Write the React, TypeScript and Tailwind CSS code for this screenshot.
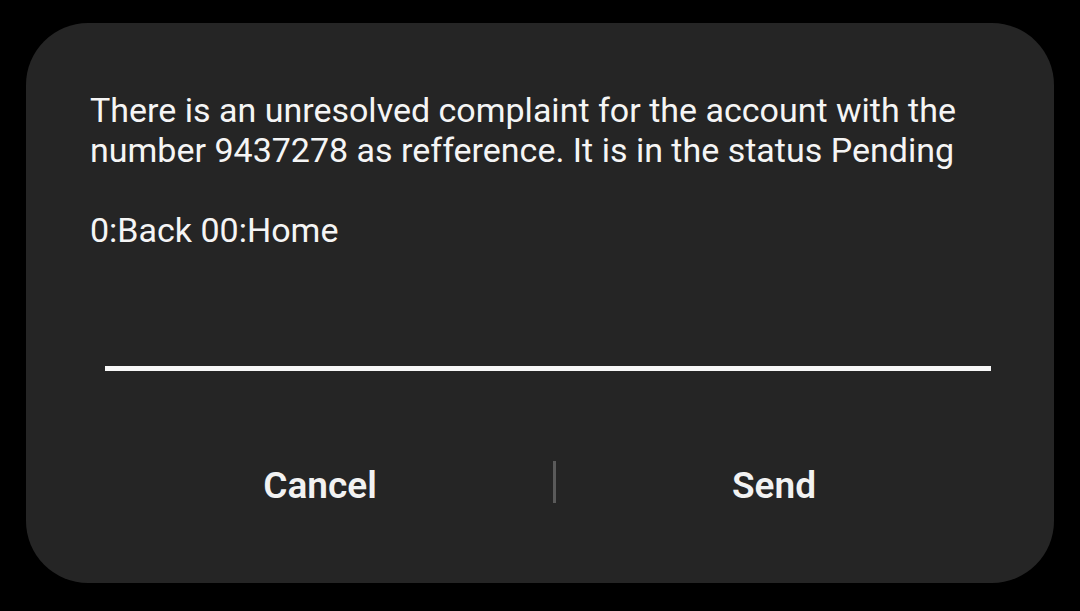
export default function App() {
  return (
    <div className="w-[1080px] h-[611px] bg-black pt-[23px] pl-[26px]" style={{ fontFamily: "Roboto, 'Liberation Sans', sans-serif" }}>
      <div className="w-[1028px] h-[560px] bg-[#252525] rounded-[62px] flex flex-col">
        <div className="pt-[67px] pl-[64px] pr-[20px] text-[34px] leading-[40px] text-[#f5f5f5]">
          <p>There is an unresolved complaint for the account with the</p>
          <p>number 9437278 as refference. It is in the status Pending</p>
          <p>&nbsp;</p>
          <p>0:Back 00:Home</p>
        </div>
        <div className="mt-[116px] ml-[79px] w-[886px] h-[5px] bg-[#f8f8f8]" />
        <div className="mt-[84px] flex items-start">
          <div className="ml-[61px] w-[466px] pt-[3px] flex justify-center">
            <span className="text-[37px] font-semibold text-[#f2f2f2]">Cancel</span>
          </div>
          <div className="mt-[6px] w-[3px] h-[42px] bg-[#5a5a5a]" />
          <div className="w-[436px] pt-[3px] flex justify-center">
            <span className="text-[37px] font-semibold text-[#f2f2f2]">Send</span>
          </div>
        </div>
      </div>
    </div>
  );
}
